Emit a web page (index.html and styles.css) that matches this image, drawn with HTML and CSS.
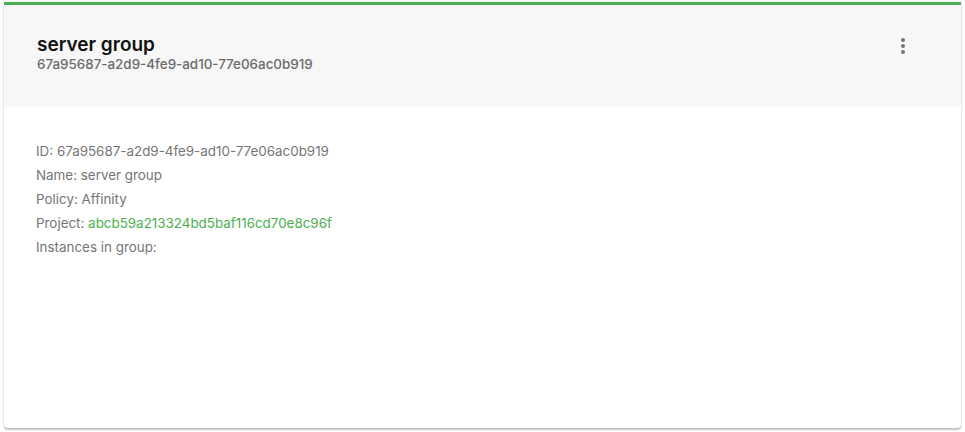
FILE: index.html
```html
<!DOCTYPE html>
<html lang="en">
<head>
    <meta charset="UTF-8">
    <meta name="viewport" content="width=device-width, initial-scale=1.0">
    <title>server group</title>
    <link rel="stylesheet" href="styles.css">
</head>
<body>

    <div class="card">
        <div class="card-header">
            <div class="titles">
                <div class="title">server group</div>
                <div class="subtitle">67a95687-a2d9-4fe9-ad10-77e06ac0b919</div>
            </div>
            <button class="menu-button" aria-label="Actions">
                <svg width="24" height="24" viewBox="0 0 24 24">
                    <circle cx="12" cy="6" r="2"></circle>
                    <circle cx="12" cy="12" r="2"></circle>
                    <circle cx="12" cy="18" r="2"></circle>
                </svg>
            </button>
        </div>

        <div class="card-body">
            <div class="row">ID: 67a95687-a2d9-4fe9-ad10-77e06ac0b919</div>
            <div class="row">Name: server group</div>
            <div class="row">Policy: Affinity</div>
            <div class="row">Project: <a href="#" class="link">abcb59a213324bd5baf116cd70e8c96f</a></div>
            <div class="row">Instances in group:</div>
        </div>
    </div>

</body>
</html>
```

FILE: styles.css
```css
body {
    margin: 0;
    padding: 2px 4px 4px 4px;
    font-family: Inter, Roboto, 'Liberation Sans', sans-serif;
    background-color: #ffffff;
    color: #333;
}

.card {
    height: 426px;
    box-sizing: border-box;
    background-color: #ffffff;
    border-top: 3px solid #4caf50;
    border-radius: 0 0 4px 4px;
    box-shadow: 0 2px 2px rgba(0, 0, 0, 0.24), 0 0 2px rgba(0, 0, 0, 0.12);
    display: flex;
    flex-direction: column;
}

.card-header {
    background-color: #f7f7f7;
    height: 102px;
    box-sizing: border-box;
    padding: 29px 46px 0 33px;
    display: flex;
    justify-content: space-between;
    align-items: flex-start;
}

.title {
    font-size: 19px;
    font-weight: 600;
    color: #111;
    line-height: 22px;
}

.subtitle {
    font-size: 13.4px;
    font-weight: 500;
    color: #6b6b6b;
    line-height: 16px;
}

.menu-button {
    background: none;
    border: none;
    padding: 0;
    margin-top: 0;
    cursor: pointer;
    fill: #757575;
    width: 24px;
    height: 24px;
}

.menu-button svg {
    width: 24px;
    height: 24px;
}

.card-body {
    padding: 32px 32px 0 32px;
}

.row {
    font-size: 13.4px;
    color: #757575;
    line-height: 24px;
}

.link {
    color: #4caf50;
    text-decoration: none;
}
```
